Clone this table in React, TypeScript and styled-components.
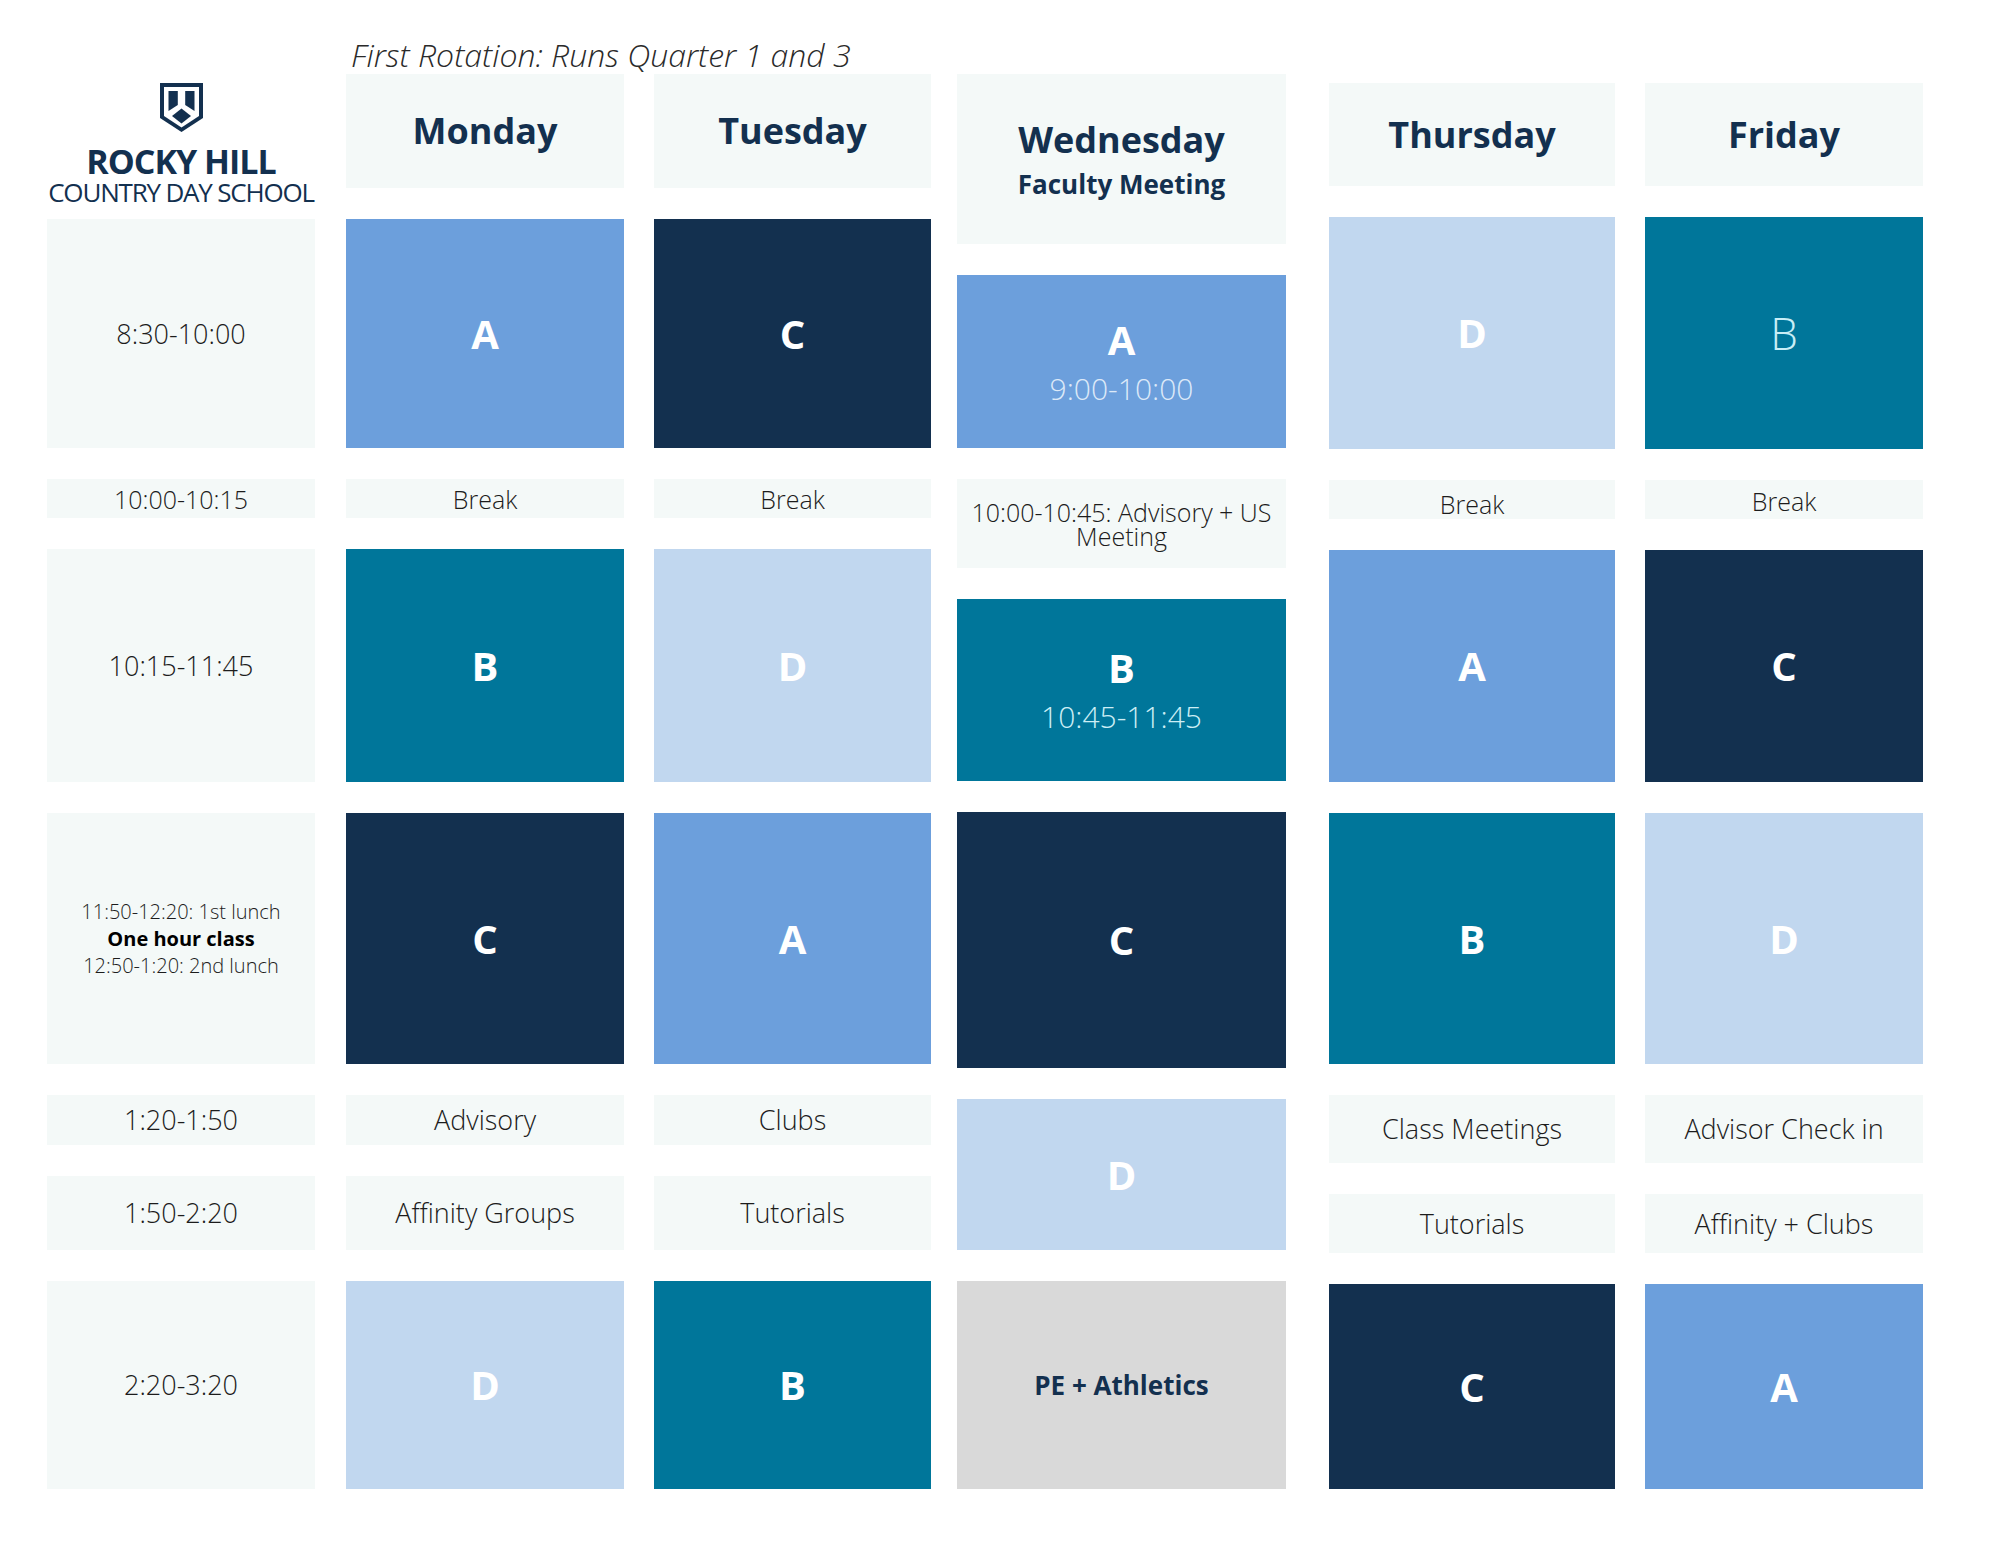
import React from "react";
import styled, { createGlobalStyle } from "styled-components";

const GlobalStyle = createGlobalStyle`
  html, body {
    margin: 0;
    padding: 0;
    background: #ffffff;
  }
  body {
    font-family: "Open Sans", "Liberation Sans", sans-serif;
  }
`;

type Tone = "A" | "B" | "C" | "D" | "pale" | "gray";

const tones: Record<Tone, string> = {
  A: "#6c9fdc",
  B: "#00769a",
  C: "#13304f",
  D: "#c1d7ef",
  pale: "#f4f9f8",
  gray: "#d9d9d9",
};

const Page = styled.div`
  width: 2000px;
  height: 1545px;
  padding-left: 47px;
  box-sizing: border-box;
  background: #ffffff;
`;

const Title = styled.div`
  height: 74px;
  padding: 39px 0 0 304px;
  box-sizing: border-box;
  font-style: italic;
  font-weight: 300;
  font-size: 32px;
  line-height: 32px;
  color: #2a2a2a;
`;

const Columns = styled.div`
  display: flex;
  align-items: flex-start;
`;

const Column = styled.div<{ $w: number; $ml?: number; $pt?: number }>`
  display: flex;
  flex-direction: column;
  gap: 31px;
  width: ${(p) => p.$w}px;
  margin-left: ${(p) => p.$ml ?? 0}px;
  padding-top: ${(p) => p.$pt ?? 0}px;
`;

const Cell = styled.div<{ $h: number; $tone: Tone; $shift?: number }>`
  height: ${(p) => p.$h}px;
  background: ${(p) => tones[p.$tone]};
  display: flex;
  flex-direction: column;
  align-items: center;
  justify-content: center;
  text-align: center;
  padding-top: ${(p) => p.$shift ?? 0}px;
  box-sizing: border-box;
`;

const LogoBlock = styled.div`
  height: 114px;
  padding-top: 9px;
  box-sizing: border-box;
  display: flex;
  flex-direction: column;
  align-items: center;
  color: #13304f;

  & > * {
    flex-shrink: 0;
  }
`;

const SchoolName = styled.div`
  margin-top: 13px;
  font-weight: 700;
  font-size: 34px;
  line-height: 33px;
  letter-spacing: -1px;
  white-space: nowrap;
`;

const SchoolSub = styled.div`
  font-weight: 400;
  font-size: 26px;
  line-height: 28px;
  letter-spacing: -1.2px;
  white-space: nowrap;
`;

const DayName = styled.div`
  font-weight: 700;
  font-size: 36px;
  line-height: 48px;
  color: #13304f;
`;

const DayNote = styled.div`
  margin-top: 2px;
  font-weight: 700;
  font-size: 26px;
  line-height: 36px;
  color: #13304f;
`;

const Letter = styled.div<{ $light?: boolean }>`
  font-weight: ${(p) => (p.$light ? 300 : 700)};
  font-size: ${(p) => (p.$light ? 44 : 40)}px;
  line-height: 50px;
  color: ${(p) => (p.$light ? "#c9eef6" : "#ffffff")};
`;

const SubTime = styled.div<{ $color: string }>`
  margin-top: 4px;
  font-weight: 300;
  font-size: 30px;
  line-height: 40px;
  color: ${(p) => p.$color};
`;

const Label = styled.div<{ $size: number }>`
  font-weight: 300;
  font-size: ${(p) => p.$size}px;
  line-height: ${(p) => Math.round(p.$size * 0.95)}px;
  color: #1c1c1c;
  padding: 0 8px;
`;

const BoldLabel = styled.div`
  font-weight: 700;
  font-size: 26px;
  color: #13304f;
`;

const LunchLine = styled.div<{ $bold?: boolean }>`
  font-weight: ${(p) => (p.$bold ? 700 : 300)};
  font-size: 20px;
  line-height: 27px;
  color: ${(p) => (p.$bold ? "#000000" : "#1c1c1c")};
`;

const Shield = () => (
  <svg width="43" height="49" viewBox="0 0 43 49">
    <path d="M0 0 H43 V35 L21.5 49 L0 35 Z" fill="#13304f" />
    <path d="M4 4 H39 V33 L21.5 44.5 L4 33 Z" fill="#ffffff" />
    <path d="M8.5 8 H17.8 V22 L8.5 28 Z" fill="#13304f" />
    <path d="M25.2 8 H34.5 V28 L25.2 22 Z" fill="#13304f" />
    <path d="M21.5 25.5 L31 33 L21.5 40.5 L12 33 Z" fill="#13304f" />
  </svg>
);

type Slot = {
  h: number;
  tone: Tone;
  letter?: string;
  light?: boolean;
  sub?: string;
  label?: string;
  size?: number;
  bold?: string;
  shift?: number;
};

type Day = {
  name: string;
  note?: string;
  w: number;
  ml: number;
  pt?: number;
  headerH: number;
  slots: Slot[];
};

const days: Day[] = [
  {
    name: "Monday",
    w: 278,
    ml: 31,
    headerH: 114,
    slots: [
      { h: 229, tone: "A", letter: "A" },
      { h: 39, tone: "pale", label: "Break", size: 25 },
      { h: 233, tone: "B", letter: "B" },
      { h: 251, tone: "C", letter: "C" },
      { h: 50, tone: "pale", label: "Advisory", size: 27 },
      { h: 74, tone: "pale", label: "Affinity Groups", size: 27 },
      { h: 208, tone: "D", letter: "D" },
    ],
  },
  {
    name: "Tuesday",
    w: 277,
    ml: 30,
    headerH: 114,
    slots: [
      { h: 229, tone: "C", letter: "C" },
      { h: 39, tone: "pale", label: "Break", size: 25 },
      { h: 233, tone: "D", letter: "D" },
      { h: 251, tone: "A", letter: "A" },
      { h: 50, tone: "pale", label: "Clubs", size: 27 },
      { h: 74, tone: "pale", label: "Tutorials", size: 27 },
      { h: 208, tone: "B", letter: "B" },
    ],
  },
  {
    name: "Wednesday",
    note: "Faculty Meeting",
    w: 329,
    ml: 26,
    headerH: 170,
    slots: [
      { h: 173, tone: "A", letter: "A", sub: "9:00-10:00" },
      { h: 89, tone: "pale", label: "10:00-10:45: Advisory + US Meeting", size: 25 },
      { h: 182, tone: "B", letter: "B", sub: "10:45-11:45" },
      { h: 256, tone: "C", letter: "C" },
      { h: 151, tone: "D", letter: "D" },
      { h: 208, tone: "gray", bold: "PE + Athletics" },
    ],
  },
  {
    name: "Thursday",
    w: 286,
    ml: 43,
    pt: 9,
    headerH: 103,
    slots: [
      { h: 232, tone: "D", letter: "D" },
      { h: 39, tone: "pale", label: "Break", size: 25, shift: 8 },
      { h: 232, tone: "A", letter: "A" },
      { h: 251, tone: "B", letter: "B" },
      { h: 68, tone: "pale", label: "Class Meetings", size: 27 },
      { h: 59, tone: "pale", label: "Tutorials", size: 27 },
      { h: 205, tone: "C", letter: "C" },
    ],
  },
  {
    name: "Friday",
    w: 278,
    ml: 30,
    pt: 9,
    headerH: 103,
    slots: [
      { h: 232, tone: "B", letter: "B", light: true },
      { h: 39, tone: "pale", label: "Break", size: 25, shift: 2 },
      { h: 232, tone: "C", letter: "C" },
      { h: 251, tone: "D", letter: "D" },
      { h: 68, tone: "pale", label: "Advisor Check in", size: 27 },
      { h: 59, tone: "pale", label: "Affinity + Clubs", size: 27 },
      { h: 205, tone: "A", letter: "A" },
    ],
  },
];

const subColor: Record<Tone, string> = {
  A: "#dce9f8",
  B: "#cdeef5",
  C: "#ffffff",
  D: "#ffffff",
  pale: "#1c1c1c",
  gray: "#13304f",
};

const SlotCell: React.FC<{ slot: Slot }> = ({ slot }) => (
  <Cell $h={slot.h} $tone={slot.tone} $shift={slot.shift}>
    {slot.letter && <Letter $light={slot.light}>{slot.letter}</Letter>}
    {slot.sub && <SubTime $color={subColor[slot.tone]}>{slot.sub}</SubTime>}
    {slot.label && <Label $size={slot.size ?? 27}>{slot.label}</Label>}
    {slot.bold && <BoldLabel>{slot.bold}</BoldLabel>}
  </Cell>
);

const App: React.FC = () => {
  return (
    <>
      <GlobalStyle />
      <Page>
        <Title>First Rotation: Runs Quarter 1 and 3</Title>
        <Columns>
          <Column $w={268}>
            <LogoBlock>
              <Shield />
              <SchoolName>ROCKY HILL</SchoolName>
              <SchoolSub>COUNTRY DAY SCHOOL</SchoolSub>
            </LogoBlock>
            <Cell $h={229} $tone="pale">
              <Label $size={27}>8:30-10:00</Label>
            </Cell>
            <Cell $h={39} $tone="pale">
              <Label $size={25}>10:00-10:15</Label>
            </Cell>
            <Cell $h={233} $tone="pale">
              <Label $size={27}>10:15-11:45</Label>
            </Cell>
            <Cell $h={251} $tone="pale">
              <LunchLine>11:50-12:20: 1st lunch</LunchLine>
              <LunchLine $bold>One hour class</LunchLine>
              <LunchLine>12:50-1:20: 2nd lunch</LunchLine>
            </Cell>
            <Cell $h={50} $tone="pale">
              <Label $size={27}>1:20-1:50</Label>
            </Cell>
            <Cell $h={74} $tone="pale">
              <Label $size={27}>1:50-2:20</Label>
            </Cell>
            <Cell $h={208} $tone="pale">
              <Label $size={27}>2:20-3:20</Label>
            </Cell>
          </Column>
          {days.map((day) => (
            <Column key={day.name} $w={day.w} $ml={day.ml} $pt={day.pt}>
              <Cell $h={day.headerH} $tone="pale">
                <DayName>{day.name}</DayName>
                {day.note && <DayNote>{day.note}</DayNote>}
              </Cell>
              {day.slots.map((slot, i) => (
                <SlotCell key={i} slot={slot} />
              ))}
            </Column>
          ))}
        </Columns>
      </Page>
    </>
  );
};

export default App;
